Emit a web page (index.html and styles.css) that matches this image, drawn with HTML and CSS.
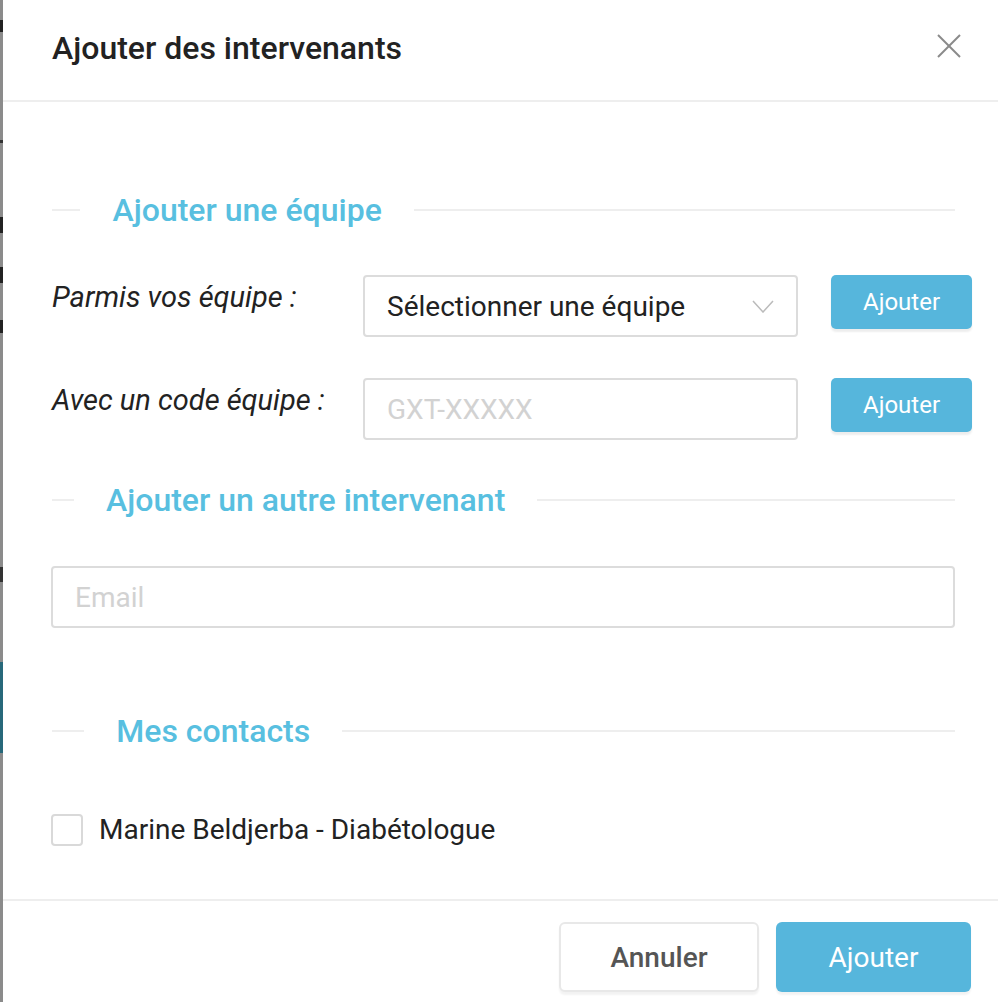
FILE: index.html
```html
<!DOCTYPE html>
<html>
  <head>
    <title>Ajouter des intervenants</title>
    <meta charset="UTF-8">
    <meta name="viewport" content="width=device-width, initial-scale=1.0">
    <link rel="stylesheet" href="styles.css">
  </head>
  <body>
    <div class="page">
      <div class="backdrop"></div>
      <div class="modal">
        <div class="modal-header">
          <h2 class="modal-title">Ajouter des intervenants</h2>
          <button class="close-btn" type="button" aria-label="Fermer">
            <svg width="24" height="24" viewBox="0 0 24 24">
              <line x1="1" y1="1" x2="23" y2="23" />
              <line x1="23" y1="1" x2="1" y2="23" />
            </svg>
          </button>
        </div>

        <div class="modal-body">
          <div class="divider first"><span class="divider-text">Ajouter une équipe</span></div>

          <div class="team-row">
            <label class="team-label">Parmis vos équipe :</label>
            <div class="select">
              <span>Sélectionner une équipe</span>
              <svg width="22" height="13" viewBox="0 0 22 13">
                <polyline points="1,1 11,12 21,1" />
              </svg>
            </div>
            <button class="btn-small" type="button">Ajouter</button>
          </div>

          <div class="team-row second">
            <label class="team-label" for="team-code">Avec un code équipe :</label>
            <input class="field" type="text" id="team-code" placeholder="GXT-XXXXX">
            <button class="btn-small" type="button">Ajouter</button>
          </div>

          <div class="divider"><span class="divider-text">Ajouter un autre intervenant</span></div>

          <input class="field email" type="text" placeholder="Email">

          <div class="divider contacts"><span class="divider-text">Mes contacts</span></div>

          <label class="contact">
            <span class="checkbox"></span>
            <span>Marine Beldjerba - Diabétologue</span>
          </label>
        </div>

        <div class="modal-footer">
          <button class="btn btn-cancel" type="button">Annuler</button>
          <button class="btn btn-primary" type="button">Ajouter</button>
        </div>
      </div>
    </div>
  </body>
</html>
```

FILE: styles.css
```css
/* Modal: ajouter des intervenants */
body {
  margin: 0;
  padding: 0;
  overflow: hidden;
  font-family: Roboto, "Liberation Sans", Arial, sans-serif;
  color: #222;
  background-color: #fff;
}

.page {
  display: flex;
  height: 1002px;
}

/* sliver of the page behind the overlay */
.backdrop {
  flex: none;
  width: 3px;
  background: linear-gradient(to bottom,
    #8b8b8b 0, #8b8b8b 20px, #222 20px, #222 32px, #8b8b8b 32px,
    #8b8b8b 140px, #333 140px, #333 143px, #8b8b8b 143px,
    #8b8b8b 217px, #222 217px, #222 233px, #8b8b8b 233px,
    #8b8b8b 267px, #222 267px, #222 283px, #8b8b8b 283px,
    #8b8b8b 320px, #222 320px, #222 333px, #8b8b8b 333px,
    #8b8b8b 567px, #333 567px, #333 582px, #8b8b8b 582px,
    #8b8b8b 662px, #27687a 662px, #27687a 753px, #8b8b8b 753px);
}

.modal {
  flex: none;
  width: 1001px;
  background-color: #fff;
}

.modal-header {
  box-sizing: border-box;
  height: 102px;
  padding: 29px 44px 0 49px;
  display: flex;
  justify-content: space-between;
  align-items: flex-start;
  border-bottom: 2px solid #eeeeee;
}

.modal-title {
  margin: 0;
  font-size: 32px;
  font-weight: 500;
  line-height: 38px;
  color: #222;
}

.close-btn {
  margin-top: 5px;
  margin-right: -1px;
  padding: 0;
  border: none;
  background: none;
  width: 24px;
  height: 24px;
  cursor: pointer;
}

.close-btn svg {
  display: block;
  stroke: #8a8a8a;
  stroke-width: 2;
}

.modal-body {
  padding: 0 49px 53px;
}

/* section titles with a rule on both sides */
.divider {
  display: flex;
  align-items: center;
  margin-top: 41px;
}

.divider.first {
  margin-top: 89px;
}

.divider.contacts {
  margin-top: 84px;
}

.divider::before,
.divider::after {
  content: "";
  height: 2px;
  background-color: #eeeeee;
}

.divider::before {
  flex: 5 1 0;
}

.divider::after {
  flex: 95 1 0;
}

.divider-text {
  padding: 0 32px;
  font-size: 32px;
  font-weight: 500;
  line-height: 38px;
  color: #58bfe0;
  white-space: nowrap;
}

.team-row {
  display: grid;
  grid-template-columns: 311px 435px 174px;
  margin-top: 46px;
  align-items: start;
}

.team-row.second {
  margin-top: 41px;
}

.team-label {
  padding-top: 5px;
  font-size: 29px;
  font-style: italic;
  color: #222;
}

.select,
.field {
  box-sizing: border-box;
  height: 62px;
  border: 2px solid #dcdcdc;
  border-radius: 4px;
  background-color: #fff;
  font-family: inherit;
  font-size: 28px;
  color: #222;
}

.select {
  display: flex;
  align-items: center;
  justify-content: space-between;
  padding: 0 22px;
}

.select svg {
  fill: none;
  stroke: #bbbbbb;
  stroke-width: 1.5;
}

.field {
  width: 100%;
  padding: 0 22px;
  outline: none;
}

.field::placeholder {
  color: #d2d2d2;
}

.btn-small {
  width: 141px;
  height: 54px;
  margin-left: 33px;
  border: none;
  border-radius: 5px;
  background-color: #56b6dc;
  color: #fff;
  font-family: inherit;
  font-size: 24px;
  box-shadow: 0 3px 2px rgba(0, 0, 0, 0.07);
  cursor: pointer;
}

.field.email {
  display: block;
  width: calc(100% + 1px);
  margin: 47px 0 0 -1px;
}

.contact {
  display: flex;
  align-items: center;
  margin-top: 63px;
  margin-left: -1px;
  font-size: 28px;
  color: #222;
}

.checkbox {
  box-sizing: border-box;
  width: 32px;
  height: 32px;
  margin-right: 16px;
  border: 2px solid #d9d9d9;
  border-radius: 4px;
}

.modal-footer {
  display: flex;
  justify-content: flex-end;
  gap: 17px;
  padding: 21px 33px 10px 0;
  border-top: 2px solid #eeeeee;
}

.btn {
  box-sizing: border-box;
  height: 70px;
  border-radius: 6px;
  font-family: inherit;
  font-size: 28px;
  cursor: pointer;
  box-shadow: 0 3px 2px rgba(0, 0, 0, 0.05);
}

.btn-cancel {
  width: 200px;
  border: 2px solid #e8e8e8;
  background-color: #fff;
  color: #555;
  font-weight: 500;
}

.btn-primary {
  width: 195px;
  border: none;
  background-color: #56b6dc;
  color: #fff;
}
```
